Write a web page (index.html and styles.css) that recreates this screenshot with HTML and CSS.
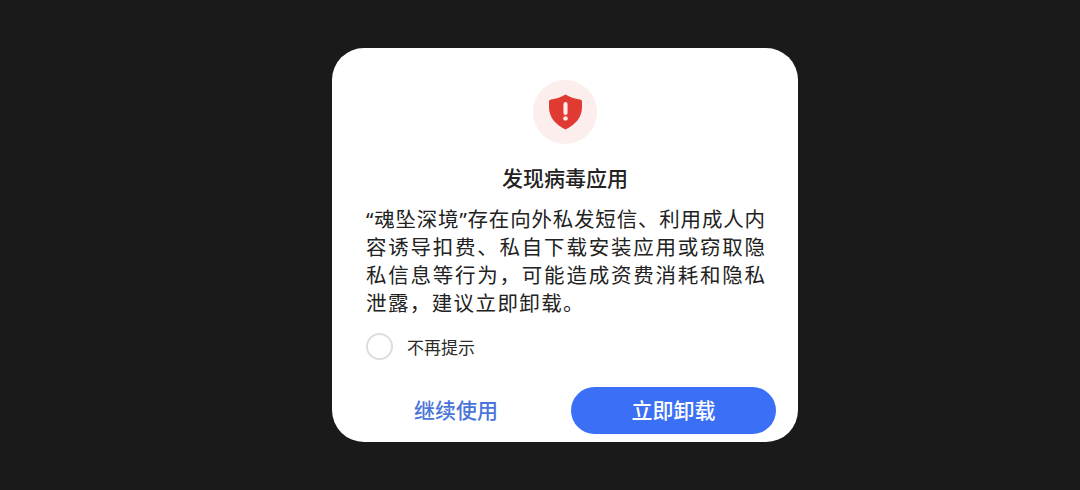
FILE: index.html
```html
<!DOCTYPE html>
<html lang="zh-CN">
   <head>
      <meta charset="UTF-8">
      <meta name="viewport" content="width=device-width, initial-scale=1.0">
      <title>发现病毒应用</title>
      <link rel="stylesheet" href="styles.css">
   </head>
   <body>
      <div class="dialog">
         <div class="icon-circle">
            <svg class="shield" viewBox="0 0 32 36" width="33" height="36" preserveAspectRatio="none">
               <path d="M16 0.5C20 3.2 25 4.8 30 5.4C31.4 5.6 32 6.4 32 8V13C32 23 26 30.5 16 35.5C6 30.5 0 23 0 13V8C0 6.4 0.6 5.6 2 5.4C7 4.8 12 3.2 16 0.5Z" fill="#e03a33"/>
               <rect x="14" y="8" width="4" height="13" rx="2" fill="#fdecea"/>
               <circle cx="16" cy="24.4" r="2.2" fill="#fdecea"/>
            </svg>
         </div>
         <h1 class="title">发现病毒应用</h1>
         <div class="message">
            <span class="line">“魂坠深境”存在向外私发短信、利用成人内</span>
            <span class="line">容诱导扣费、私自下载安装应用或窃取隐</span>
            <span class="line">私信息等行为，可能造成资费消耗和隐私</span>
            <span class="line line-last">泄露，建议立即卸载。</span>
         </div>
         <div class="remind">
            <span class="radio"></span>
            <span class="remind-label">不再提示</span>
         </div>
         <div class="actions">
            <button class="btn btn-text">继续使用</button>
            <button class="btn btn-primary">立即卸载</button>
         </div>
      </div>
   </body>
</html>
```

FILE: styles.css
```css
body {
margin: 0;
padding: 48px 0 0 332px;
height: 490px;
box-sizing: border-box;
overflow: hidden;
background-color: #1a1a1a;
font-family: "Noto Sans", "Noto Sans CJK SC", sans-serif;
color: #222;
}
.dialog {
width: 466px;
height: 394px;
box-sizing: border-box;
padding-top: 32px;
background-color: #fff;
border-radius: 32px;
display: flex;
flex-direction: column;
}
.icon-circle {
width: 64px;
height: 64px;
margin-left: 201px;
border-radius: 50%;
background-color: #fbeeed;
display: flex;
align-items: center;
justify-content: center;
}
.shield {
display: block;
}
.title {
margin: 19px 0 0;
font-size: 21px;
font-weight: 500;
line-height: 30px;
text-align: center;
color: #222;
}
.message {
width: 399px;
margin: 12px 0 0 34px;
font-size: 20.5px;
line-height: 28px;
}
.line {
display: block;
height: 28px;
white-space: nowrap;
text-align: justify;
text-align-last: justify;
text-justify: inter-character;
}
.line-last {
text-align-last: left;
letter-spacing: 1.4px;
}
.remind {
display: flex;
align-items: center;
margin: 16px 0 0 34px;
}
.radio {
width: 27px;
height: 27px;
box-sizing: border-box;
border: 2px solid #ddd;
border-radius: 50%;
}
.remind-label {
margin-left: 14px;
font-size: 17px;
color: #2b2b2b;
}
.actions {
display: flex;
align-items: center;
margin-top: 27px;
padding: 0 22px 0 9px;
}
.btn {
height: 47px;
padding: 0 0 3px;
border: none;
border-radius: 24px;
font-family: inherit;
font-size: 21px;
font-weight: 500;
}
.btn-text {
flex: 1;
background: none;
color: #4a74d9;
}
.btn-primary {
width: 205px;
background-color: #3b6ff5;
color: #fff;
}
```
